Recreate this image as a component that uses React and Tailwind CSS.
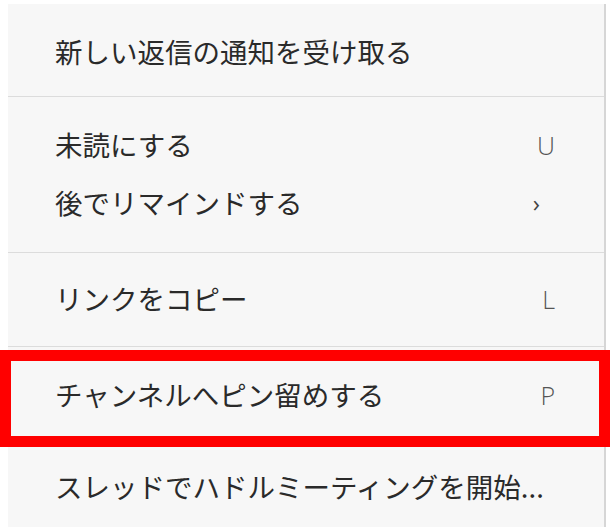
import React from "react";

const font = { fontFamily: '"Noto Sans CJK JP", "Noto Sans", sans-serif' };

function Item({ label, right, chevron }) {
  return (
    <div className="flex h-[58px] items-center justify-between pl-[47px] pr-[49px]">
      <span className="text-[27.5px] leading-none text-[#2a2a2a]">{label}</span>
      {right && (
        <span className="text-[25px] font-light leading-none text-[#555555] font-['Open_Sans',sans-serif]">{right}</span>
      )}
      {chevron && (
        <span className="mr-[15px] text-[24px] leading-none text-[#444444] font-['Open_Sans',sans-serif]">›</span>
      )}
    </div>
  );
}

function Divider() {
  return <div className="h-px bg-[#dcdcdc]" />;
}

export default function App() {
  return (
    <div className="relative h-[532px] w-[610px] overflow-hidden bg-white" style={font}>
      <div className="ml-[8px] mt-[4px] h-[523px] w-[598px] border-r-[2px] border-[#d6d6d6] bg-[#f7f7f7]">
        <div className="pt-[19px] pb-[15px]">
          <Item label="新しい返信の通知を受け取る" />
        </div>
        <Divider />
        <div className="pt-[19px] pb-[20px]">
          <Item label="未読にする" right="U" />
          <Item label="後でリマインドする" chevron />
        </div>
        <Divider />
        <div className="pt-[17px] pb-[18px]">
          <Item label="リンクをコピー" right="L" />
        </div>
        <Divider />
        <div className="pt-[19px] pb-[18px]">
          <Item label="チャンネルへピン留めする" right="P" />
        </div>
        <Divider />
        <div className="pt-[15px]">
          <Item label="スレッドでハドルミーティングを開始..." />
        </div>
      </div>
      <div className="absolute left-0 top-[350px] h-[97px] w-[610px] border-[11px] border-[#ff0000]" />
    </div>
  );
}
